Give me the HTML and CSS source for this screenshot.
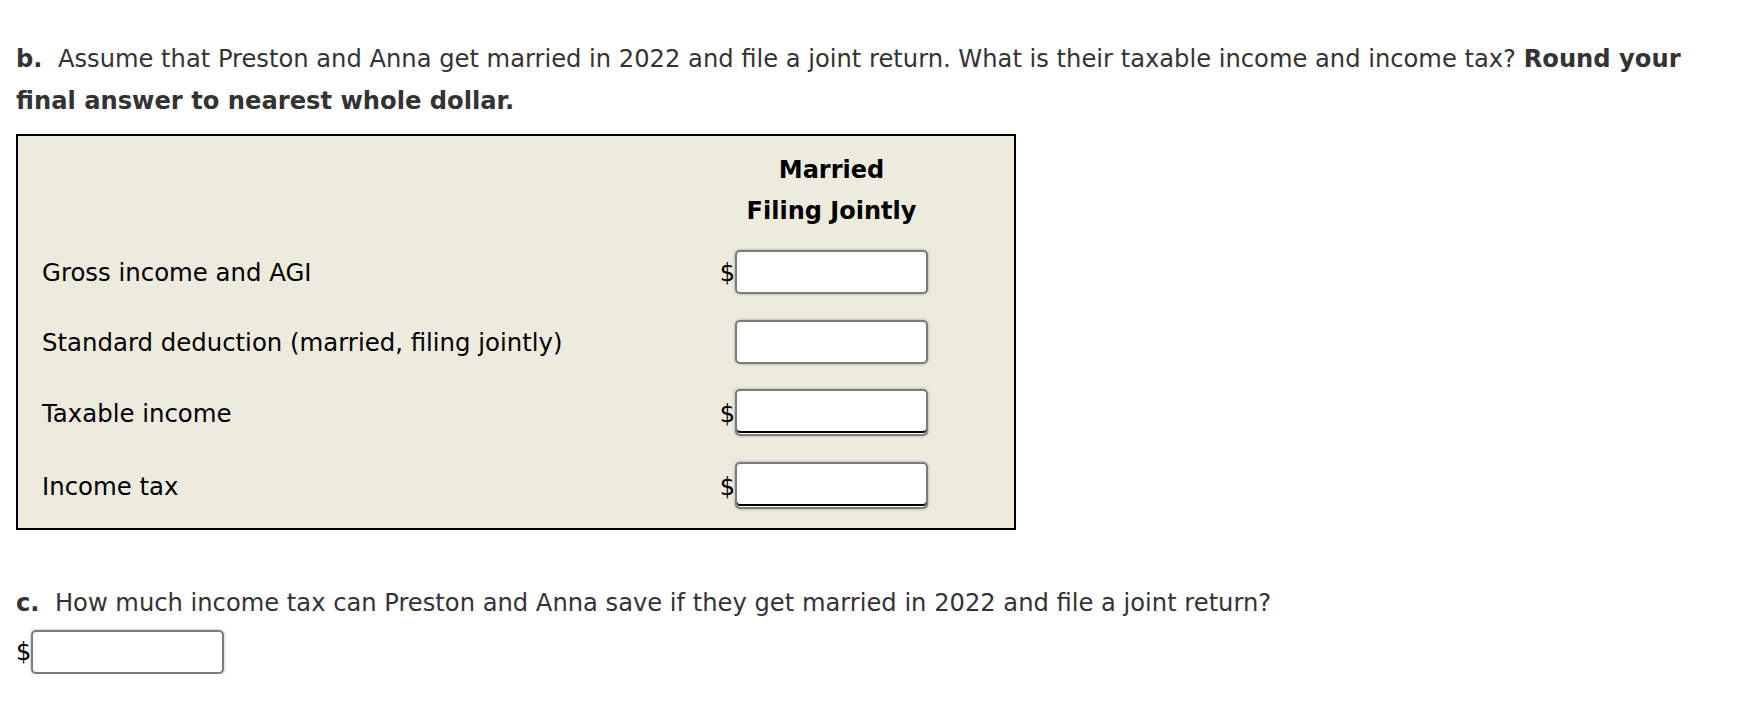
FILE: index.html
```html
<!DOCTYPE html>
<html lang="en">
<head>
<meta charset="utf-8">
<title>Question</title>
<link rel="stylesheet" href="styles.css">
</head>
<body>
<div class="question">
  <p class="prompt"><b>b.</b>&nbsp; Assume that Preston and Anna get married in 2022 and file a joint return. What is their taxable income and income tax? <b>Round your final answer to nearest whole dollar.</b></p>

  <div class="worksheet">
    <div class="ws-head">
      <div class="col-head">Married<br>Filing Jointly</div>
    </div>
    <div class="ws-row">
      <span class="label">Gross income and AGI</span>
      <span class="cur">$</span>
      <input class="field" type="text">
    </div>
    <div class="ws-row">
      <span class="label">Standard deduction (married, filing jointly)</span>
      <span class="cur"></span>
      <input class="field" type="text">
    </div>
    <div class="ws-row total">
      <span class="label">Taxable income</span>
      <span class="cur">$</span>
      <input class="field double" type="text">
    </div>
    <div class="ws-row total last">
      <span class="label">Income tax</span>
      <span class="cur">$</span>
      <input class="field double" type="text">
    </div>
  </div>

  <p class="prompt part-c"><b>c.</b>&nbsp; How much income tax can Preston and Anna save if they get married in 2022 and file a joint return?</p>
  <div class="answer">
    <span class="cur">$</span>
    <input class="field" type="text">
  </div>
</div>
</body>
</html>
```
FILE: styles.css
```css
html, body {
  margin: 0;
  padding: 0;
  background: #ffffff;
}

body {
  font-family: "DejaVu Sans", Verdana, sans-serif;
  font-size: 24px;
}

.question {
  padding: 38px 16px 0 16px;
}

.prompt {
  margin: 0;
  color: #333333;
  font-size: 24.2px;
  line-height: 42px;
  max-width: 1700px;
}

.worksheet {
  margin-top: 12px;
  width: 1000px;
  box-sizing: border-box;
  border: 2px solid #000000;
  background: #edebde;
  color: #000000;
  padding: 14px 0 4px 0;
}

.ws-head,
.ws-row {
  display: grid;
  grid-template-columns: 1fr 17px 193px;
  padding: 0 86px 0 24px;
  align-items: center;
}

.col-head {
  grid-column: 3;
  display: flex;
  flex-direction: column;
  align-items: center;
  font-weight: bold;
  line-height: 41px;
  white-space: nowrap;
  text-align: center;
}

.ws-head {
  margin-bottom: 6px;
}

.ws-row {
  height: 70px;
}

.ws-row.total {
  height: 72px;
}

.ws-row.last {
  height: 74px;
}

.ws-row .field {
  margin-bottom: 3px;
}

.label {
  font-size: 24.4px;
  line-height: 30px;
}

.cur {
  line-height: 30px;
  text-align: right;
}

.field {
  display: block;
  box-sizing: border-box;
  width: 193px;
  height: 44px;
  margin: 0;
  padding: 0 6px;
  border: 2px solid #7b7b7b;
  border-radius: 5px;
  background: #ffffff;
  box-shadow: 0 0 3px rgba(0, 0, 0, 0.35);
  font: inherit;
}

.field.double {
  height: 47px;
  box-shadow: inset 0 -1px 0 #ffffff, inset 0 -3px 0 #000000, 0 0 3px rgba(0, 0, 0, 0.35);
}

.part-c {
  margin-top: 52px;
}

.answer {
  display: flex;
  align-items: center;
  margin-top: 6px;
}

.answer .cur {
  width: 15px;
  text-align: left;
}
```
